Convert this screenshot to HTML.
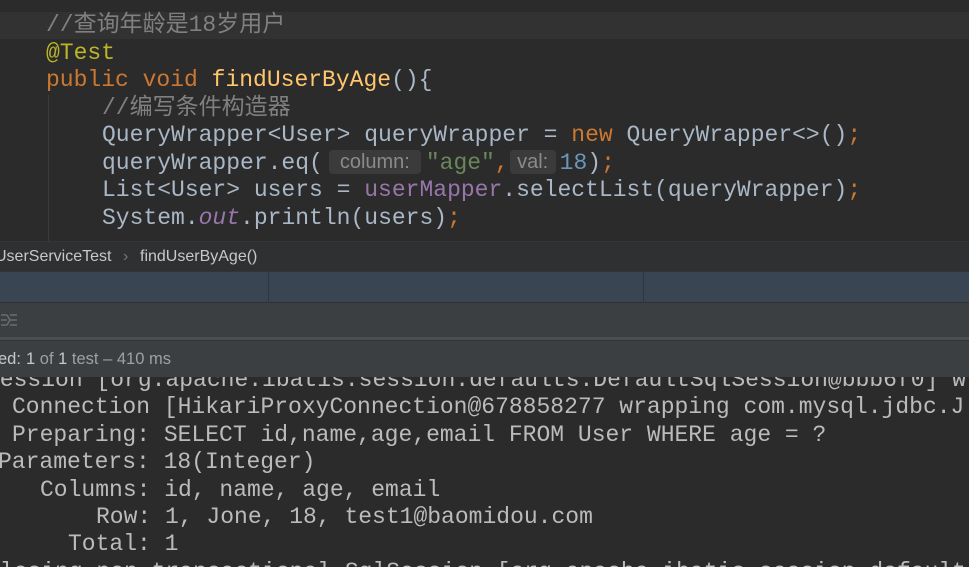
<!DOCTYPE html>
<html><head><meta charset="utf-8"><style>
*{margin:0;padding:0;box-sizing:border-box}
body{width:969px;height:567px;overflow:hidden;background:#2b2b2b;position:relative;font-family:"Liberation Mono","Noto Sans CJK SC",monospace}
.ed{position:absolute;left:0;top:0;width:969px;height:241px;background:#2b2b2b;overflow:hidden}
.hl{position:absolute;left:0;top:12px;width:969px;height:27px;background:#323232}
.ln{position:absolute;white-space:pre;font-size:23px;line-height:27.5px;height:27.5px;color:#a9b7c6}
.c{color:#808080}.k{color:#cc7832}.a{color:#bbb529}.f{color:#ffc66d}.s{color:#6a8759}.n{color:#6897bb}.p{color:#9876aa}.i{font-style:italic}
.hint{display:inline-block;background:#3b3b3b;color:#8a8a8a;font-family:"Liberation Sans",sans-serif;font-size:20px;line-height:24px;height:24px;border-radius:4px;text-align:center;vertical-align:1px}
.guide{position:absolute;left:48px;top:95px;width:1px;height:146px;background:#3b3b3b}
.bc{position:absolute;left:0;top:241px;width:969px;height:30px;background:#2f3032;color:#c8c8c8;font-family:"Liberation Sans",sans-serif;font-size:16px;line-height:30px;border-top:1px solid #353638}
.blue{position:absolute;left:0;top:271px;width:969px;height:32px;background:#3a4554;border-top:1px solid #323436;border-bottom:1px solid #2e3236}
.tb{position:absolute;left:0;top:303px;width:969px;height:34px;background:#3c3f41}
.sep{position:absolute;left:0;top:337px;width:969px;height:4px;background:#4b4e50;border-bottom:1px solid #333}
.st{position:absolute;left:0;top:341px;width:969px;height:36px;background:#3c3f41;color:#a0a0a0;font-family:"Liberation Sans",sans-serif;font-size:16.5px;line-height:36px}
.con{position:absolute;left:0;top:377px;width:969px;height:190px;background:#2b2b2b;overflow:hidden}
.cl{position:absolute;white-space:pre;font-size:23px;line-height:27.4px;color:#bbbbbb}
</style></head><body>
<div class="ed">
<div class="hl"></div>
<div class="guide"></div>
<div class="ln" style="left:46px;top:12px"><span class="c">//查询年龄是18岁用户</span></div>
<div class="ln" style="left:46px;top:39.5px"><span class="a">@Test</span></div>
<div class="ln" style="left:46px;top:67px"><span class="k">public void </span><span class="f">findUserByAge</span>(){</div>
<div class="ln" style="left:102px;top:94.5px"><span class="c">//编写条件构造器</span></div>
<div class="ln" style="left:102px;top:122px">QueryWrapper&lt;User&gt; queryWrapper = <span class="k">new </span>QueryWrapper&lt;&gt;()<span class="k">;</span></div>
<div class="ln" style="left:102px;top:149.5px">queryWrapper.eq(<span class="hint" style="width:92px;margin:0 5px 0 6px">column:</span><span class="s">"age"</span><span class="k">,</span><span class="hint" style="width:46px;margin:0 4px 0 1px">val:</span><span class="n">18</span>)<span class="k">;</span></div>
<div class="ln" style="left:102px;top:177px">List&lt;User&gt; users = <span class="p">userMapper</span>.selectList(queryWrapper)<span class="k">;</span></div>
<div class="ln" style="left:102px;top:204.5px">System.<span class="p i">out</span>.println(users)<span class="k">;</span></div>
</div>
<div class="bc"><span style="position:absolute;left:-5px">UserServiceTest</span><span style="position:absolute;left:123px;color:#777">›</span><span style="position:absolute;left:140px">findUserByAge()</span></div>
<div class="blue"><div style="position:absolute;left:268px;top:0;width:1px;height:31px;background:#2f3640"></div><div style="position:absolute;left:643px;top:0;width:1px;height:31px;background:#2f3640"></div></div>
<div class="tb"><svg style="position:absolute;left:0;top:9px" width="18" height="16" viewBox="0 0 18 16"><path d="M1 3h6M1 8h6M1 13h6M10 3h7M10 8h7M10 13h7M7 3l3 5-3 5" stroke="#6a6d70" stroke-width="1.5" fill="none"/></svg></div>
<div class="sep"></div>
<div class="st"><span style="position:absolute;left:-2px;color:#c8c8c8">ed:</span><span style="position:absolute;left:26px"><span style="color:#c8c8c8">1</span> of <span style="color:#c8c8c8">1</span> test – 410 ms</span></div>
<div class="con">
<div class="cl" style="left:-14px;top:-10px">Session [org.apache.ibatis.session.defaults.DefaultSqlSession@bbb6f0] w</div>
<div class="cl" style="left:12px;top:17.4px">Connection [HikariProxyConnection@678858277 wrapping com.mysql.jdbc.J</div>
<div class="cl" style="left:12px;top:44.8px">Preparing: SELECT id,name,age,email FROM User WHERE age = ?</div>
<div class="cl" style="left:-2px;top:72.2px">Parameters: 18(Integer)</div>
<div class="cl" style="left:40px;top:99.6px">Columns: id, name, age, email</div>
<div class="cl" style="left:96px;top:127px">Row: 1, Jone, 18, test1@baomidou.com</div>
<div class="cl" style="left:68px;top:154.4px">Total: 1</div>
<div class="cl" style="left:-14px;top:181.8px">Closing non transactional SqlSession [org.apache.ibatis.session.defaults.D</div>
</div>
</body></html>
